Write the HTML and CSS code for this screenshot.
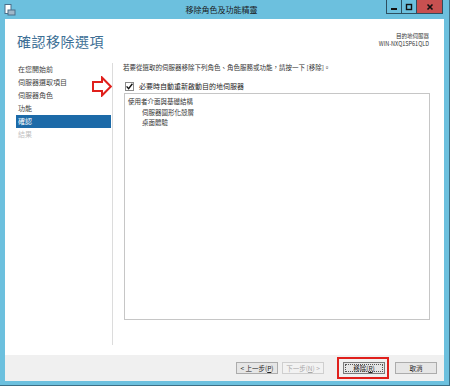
FILE: index.html
```html
<!DOCTYPE html>
<html lang="zh-Hant">
  <head>
    <meta charset="UTF-8" />
    <title>移除角色及功能精靈</title>
    <link rel="stylesheet" href="styles.css">
  </head>
  <body>
    <div class="window">
      <div class="title-bar">
        <span class="app-icon">
          <svg width="12" height="12" viewBox="0 0 12 12">
            <rect x="1" y="0.5" width="6" height="9" fill="#fff" stroke="#4a6f8a" stroke-width="1"/>
            <rect x="4" y="6" width="7" height="5" fill="#9fb7c9" stroke="#4a6f8a" stroke-width="1"/>
          </svg>
        </span>
        <span class="title">移除角色及功能精靈</span>
        <div class="caption-buttons">
          <span class="cap-btn">
            <svg width="8" height="8" viewBox="0 0 8 8"><rect x="1" y="5" width="6" height="2" fill="#111"/></svg>
          </span>
          <span class="cap-btn">
            <svg width="8" height="8" viewBox="0 0 8 8"><rect x="1.5" y="1.5" width="5" height="5" fill="none" stroke="#111" stroke-width="1.4"/></svg>
          </span>
          <span class="cap-btn close">
            <svg width="8" height="8" viewBox="0 0 8 8"><path d="M1.5 1.5 L6.5 6.5 M6.5 1.5 L1.5 6.5" stroke="#111" stroke-width="1.6"/></svg>
          </span>
        </div>
      </div>

      <div class="client">
        <div class="header">
          <h1>確認移除選項</h1>
          <div class="dest">
            <div>目的地伺服器</div>
            <div>WIN-NXQ1SP61QLD</div>
          </div>
        </div>

        <div class="main">
          <ul class="nav">
            <li>在您開始前</li>
            <li>伺服器選取項目</li>
            <li>伺服器角色</li>
            <li>功能</li>
            <li class="active">確認</li>
            <li class="disabled">結果</li>
          </ul>

          <div class="content">
            <p class="intro">若要從選取的伺服器移除下列角色、角色服務或功能，請按一下 [移除]。</p>
            <label class="check-row">
              <span class="checkbox">
                <svg width="9" height="9" viewBox="0 0 9 9"><path d="M1.6 4.4 L3.6 6.6 L7.4 1.8" fill="none" stroke="#111" stroke-width="1.4"/></svg>
              </span>
              必要時自動重新啟動目的地伺服器
            </label>
            <div class="list-box">
              <div class="item">使用者介面與基礎結構</div>
              <div class="item sub">伺服器圖形化殼層</div>
              <div class="item sub">桌面體驗</div>
            </div>
            <span class="arrow">
              <svg width="20" height="21" viewBox="0 0 20 21">
                <path d="M1 6 H10 V1.5 L18.8 10.5 L10 19.5 V15 H1 Z" fill="#fff" stroke="#e0201c" stroke-width="2" stroke-linejoin="miter"/>
              </svg>
            </span>
          </div>
        </div>

        <div class="footer">
          <button class="btn">&lt; 上一步(<u>P</u>)</button>
          <button class="btn" disabled>下一步(<u>N</u>) &gt;</button>
          <span class="highlight">
            <button class="btn default">移除(<u>R</u>)</button>
          </span>
          <button class="btn">取消</button>
        </div>
      </div>
    </div>
  </body>
</html>
```

FILE: styles.css
```css
* {
  box-sizing: border-box;
}
html,
body {
  margin: 0;
  padding: 0;
}
body {
  width: 450px;
  height: 386px;
  overflow: hidden;
  font-family: "Noto Sans CJK TC", "Liberation Sans", sans-serif;
  background: #fff;
}
.window {
  width: 450px;
  height: 386px;
  background: #6cc0de;
  border-right: 1px solid #3c6f86;
  border-bottom: 1px solid #3c6f86;
  padding: 0 5px 4px 5px;
  display: flex;
  flex-direction: column;
}
.title-bar {
  height: 19px;
  display: flex;
  align-items: flex-start;
  margin: 0 -5px 0 -5px;
  padding: 0 6px 0 4px;
}
.app-icon {
  margin-top: 4px;
  width: 12px;
  height: 12px;
  display: flex;
}
.title {
  flex: 1;
  text-align: center;
  font-size: 8px;
  line-height: 19px;
  color: #1a1a1a;
  padding-left: 40px;
}
.caption-buttons {
  display: flex;
  height: 14px;
}
.cap-btn {
  width: 16px;
  height: 14px;
  border: 1px solid #2d4f60;
  border-top: none;
  margin-left: -1px;
  display: flex;
  align-items: center;
  justify-content: center;
}
.cap-btn.close {
  width: 27px;
  background: #c75050;
}
.client {
  flex: 1;
  background: #fff;
  display: flex;
  flex-direction: column;
}
.header {
  height: 41px;
  display: flex;
  justify-content: space-between;
  padding: 12px 15px 0 12px;
}
.header h1 {
  margin: 0;
  font-weight: normal;
  font-size: 14px;
  line-height: 20px;
  color: #3d6f95;
  letter-spacing: 0.5px;
}
.dest {
  text-align: right;
  font-size: 5.5px;
  line-height: 8px;
  color: #333;
  padding-top: 1px;
}
.main {
  flex: 1;
  display: flex;
  padding-top: 1px;
}
.nav {
  list-style: none;
  margin: 2px 0 10px 11px;
  padding: 0;
  width: 97px;
  border-right: 1px solid #dcdcdc;
}
.nav li {
  height: 13px;
  line-height: 13px;
  font-size: 7px;
  color: #444;
  padding-left: 2px;
  margin-right: 1px;
}
.nav li.active {
  background: #1c6aa8;
  color: #fff;
}
.nav li.disabled {
  color: #c2c2c2;
}
.content {
  flex: 1;
  padding: 0 14px 0 10px;
  position: relative;
}
.intro {
  margin: 0;
  font-size: 6.5px;
  line-height: 12px;
  color: #333;
}
.check-row {
  display: flex;
  align-items: center;
  height: 12px;
  margin-top: 7px;
  font-size: 7px;
  color: #222;
  padding-left: 2px;
}
.checkbox {
  width: 9px;
  height: 9px;
  display: flex;
  margin-right: 5px;
  border: 1px solid #8a8a8a;
  background: #fff;
}
.checkbox svg {
  margin: -1px;
}
.list-box {
  margin-top: 1px;
  margin-left: 1px;
  height: 227px;
  border: 1px solid #c6c6c6;
  padding: 2px 3px;
}
.item {
  font-size: 6.5px;
  line-height: 10.5px;
  color: #333;
}
.item.sub {
  padding-left: 14px;
}
.arrow {
  position: absolute;
  left: -21px;
  top: 15px;
  display: flex;
}
.footer {
  height: 26px;
  background: #f0f0f0;
  display: flex;
  align-items: center;
  justify-content: flex-end;
  padding-right: 7px;
}
.btn {
  width: 42px;
  height: 12px;
  padding: 0;
  font-family: inherit;
  font-size: 6.5px;
  line-height: 10px;
  color: #222;
  background: #e6e6e6;
  border: 1px solid #acacac;
  margin-left: 4px;
}
.btn u {
  text-decoration: underline;
}
.btn:disabled {
  color: #a8a8a8;
  background: #f2f2f2;
  border-color: #cfcfcf;
}
.highlight {
  border: 2px solid #e0201c;
  margin-left: 13px;
  margin-right: 2px;
  padding: 3px 2px 3px 4px;
  display: flex;
}
.highlight .btn {
  margin-left: 0;
  border-color: #7a7a7a;
  outline: 1px dotted #555;
  outline-offset: -3px;
}
```
